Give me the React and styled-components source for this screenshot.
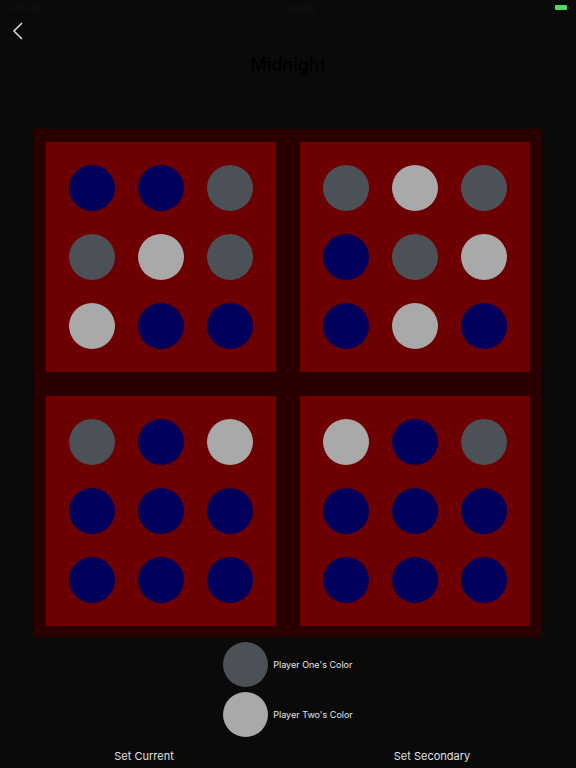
import styled, { createGlobalStyle } from "styled-components";

const GlobalStyle = createGlobalStyle`
  html, body {
    margin: 0;
    padding: 0;
    background: #0a0a0a;
  }
  body {
    font-family: "Inter", "Liberation Sans", sans-serif;
  }
`;

const Page = styled.div`
  width: 576px;
  height: 768px;
  background: #0a0a0a;
  display: flex;
  flex-direction: column;
  overflow: hidden;
`;

const StatusBar = styled.div`
  height: 14px;
  display: flex;
  align-items: center;
  justify-content: space-between;
  padding: 0 9px 0 6px;
  font-size: 9px;
  color: #131313;
`;

const Battery = styled.div`
  width: 12px;
  height: 5px;
  border-radius: 1px;
  background: #4cd964;
`;

const NavBar = styled.div`
  height: 34px;
  display: flex;
  align-items: center;
  padding-left: 12px;
`;

const BackButton = styled.button`
  background: none;
  border: none;
  padding: 0;
  width: 16px;
  height: 20px;
  display: flex;
  align-items: center;
  cursor: pointer;
`;

const Title = styled.h1`
  margin: 0;
  height: 34px;
  line-height: 34px;
  text-align: center;
  font-size: 18px;
  font-weight: 500;
  color: #000;
`;

const Board = styled.div`
  margin: 47px auto 0;
  width: 508px;
  height: 508px;
  box-sizing: border-box;
  padding: 13px 12px 12px 12px;
  background: #2b0000;
  display: grid;
  grid-template-columns: 230px 230px;
  grid-template-rows: 230px 230px;
  column-gap: 24px;
  row-gap: 24px;
`;

const Quadrant = styled.div`
  background: #6d0000;
  box-sizing: border-box;
  padding: 23px;
  display: grid;
  grid-template-columns: repeat(3, 46px);
  grid-template-rows: repeat(3, 46px);
  gap: 23px;
`;

const COLORS = {
  N: "#00005c",
  D: "#4b5157",
  L: "#a9a9a9",
};

const Dot = styled.div`
  width: ${(p) => p.$size}px;
  height: ${(p) => p.$size}px;
  border-radius: 50%;
  background: ${(p) => COLORS[p.$tone]};
  flex-shrink: 0;
`;

const Legend = styled.div`
  margin: 5px auto 0;
  display: flex;
  flex-direction: column;
  gap: 5px;
`;

const LegendRow = styled.div`
  display: flex;
  align-items: center;
  gap: 5px;
`;

const LegendLabel = styled.span`
  font-size: 9px;
  color: #e6e6e6;
  white-space: nowrap;
`;

const Actions = styled.div`
  display: grid;
  grid-template-columns: 1fr 1fr;
  height: 22px;
  margin-top: 8px;
`;

const ActionButton = styled.button`
  background: none;
  border: none;
  font-family: inherit;
  font-size: 11px;
  color: #e0e0e0;
  cursor: pointer;
`;

const quadrants = [
  ["NND", "DLD", "LNN"],
  ["DLD", "NDL", "NLN"],
  ["DNL", "NNN", "NNN"],
  ["LND", "NNN", "NNN"],
];

export default function App() {
  return (
    <Page>
      <GlobalStyle />
      <StatusBar>
        <span>9:41 AM</span>
        <span>Tuesday</span>
        <Battery />
      </StatusBar>
      <NavBar>
        <BackButton aria-label="Back">
          <svg width="12" height="18" viewBox="0 0 12 18">
            <path d="M10 1 L2 9 L10 17" fill="none" stroke="#d8d8d8" strokeWidth="1.6" />
          </svg>
        </BackButton>
      </NavBar>
      <Title>Midnight</Title>

      <Board>
        {quadrants.map((rows, qi) => (
          <Quadrant key={qi}>
            {rows.join("").split("").map((tone, i) => (
              <Dot key={i} $tone={tone} $size={46} />
            ))}
          </Quadrant>
        ))}
      </Board>

      <Legend>
        <LegendRow>
          <Dot $tone="D" $size={45} />
          <LegendLabel>Player One's Color</LegendLabel>
        </LegendRow>
        <LegendRow>
          <Dot $tone="L" $size={45} />
          <LegendLabel>Player Two's Color</LegendLabel>
        </LegendRow>
      </Legend>

      <Actions>
        <ActionButton>Set Current</ActionButton>
        <ActionButton>Set Secondary</ActionButton>
      </Actions>
    </Page>
  );
}
